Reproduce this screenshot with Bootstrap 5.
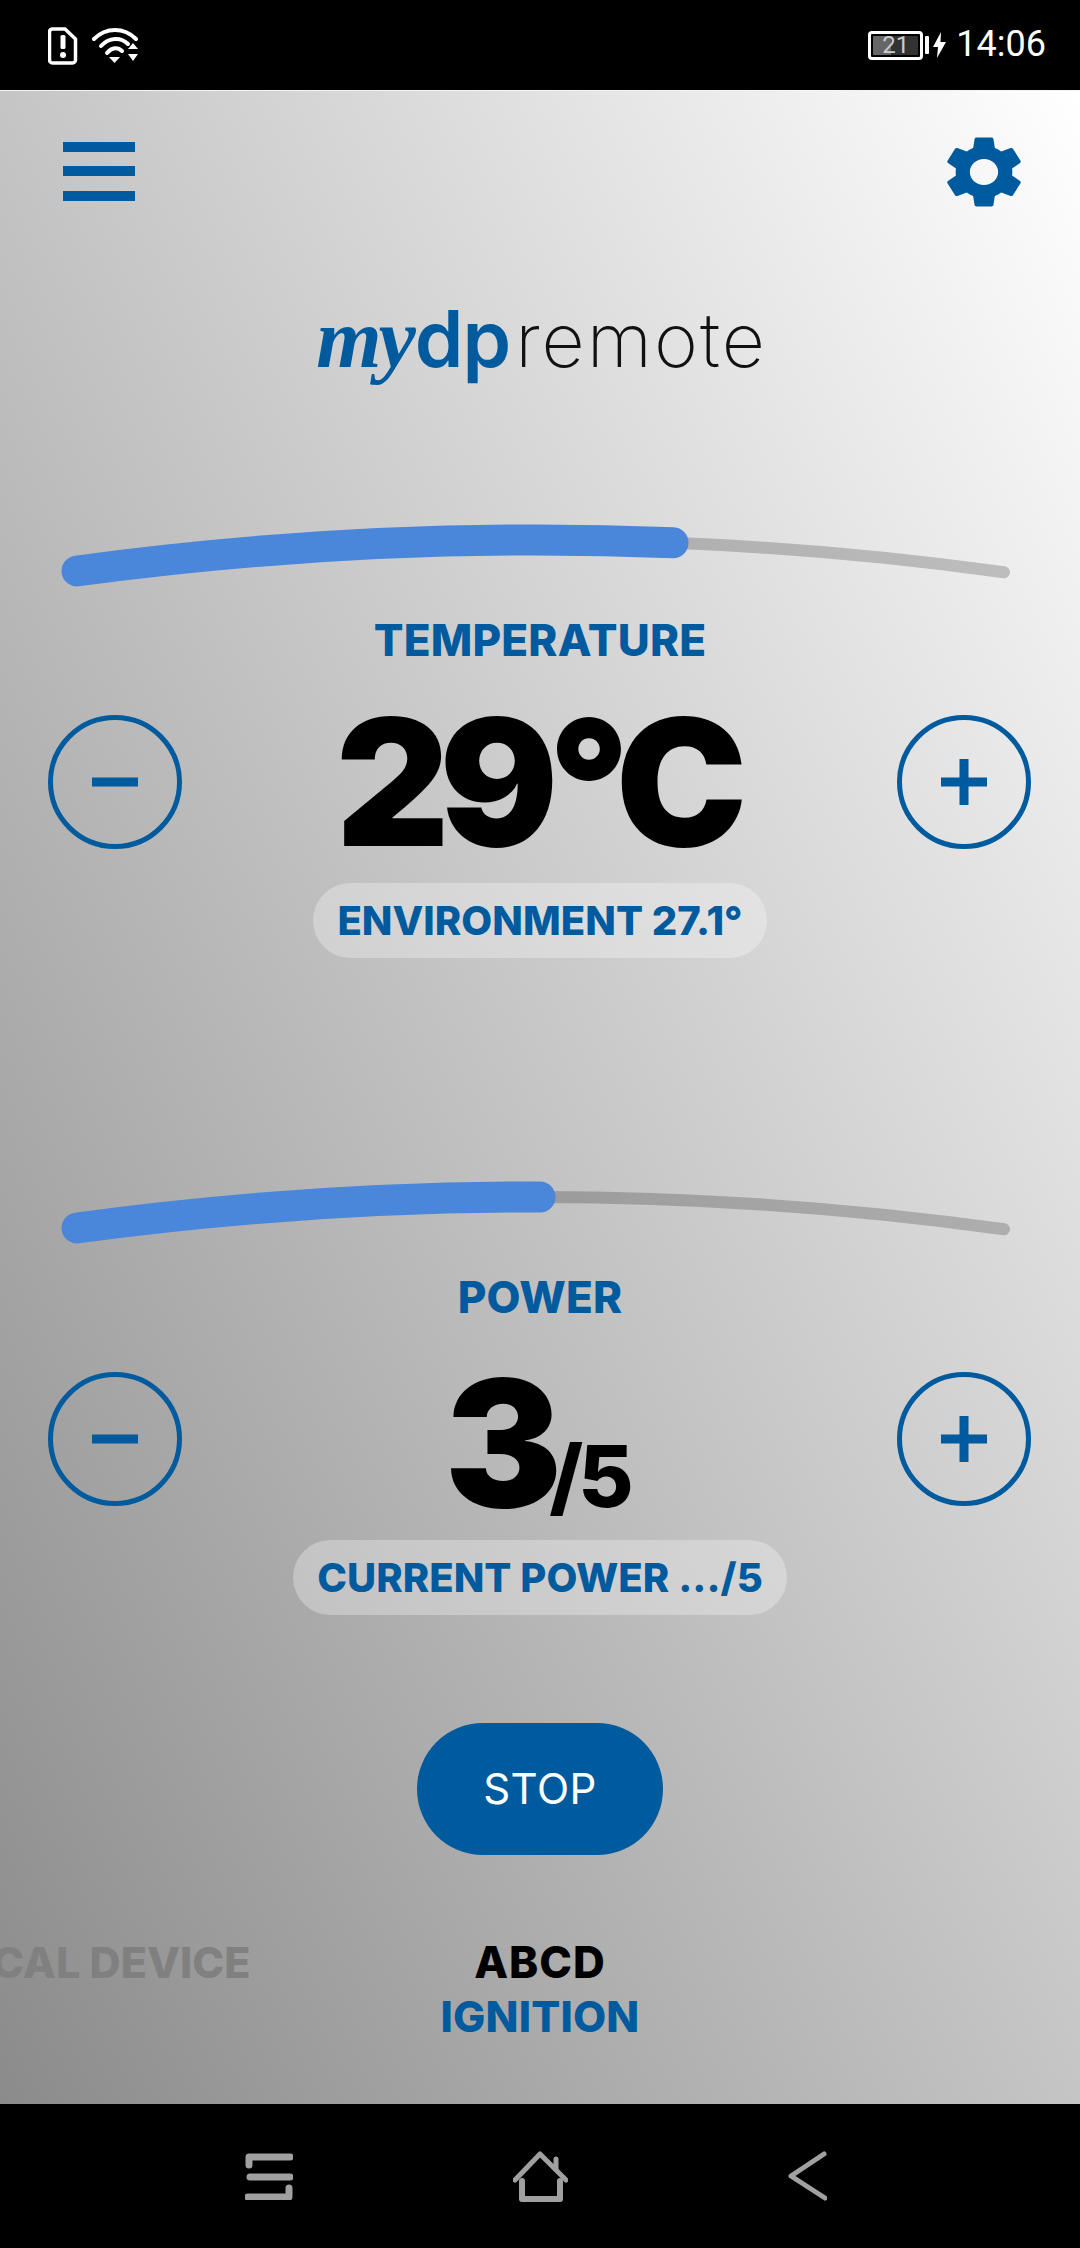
<!doctype html>
<html lang="en">
<head>
<meta charset="utf-8">
<title>mydp remote</title>
<link rel="stylesheet" href="https://cdn.jsdelivr.net/npm/bootstrap@5.3.0/dist/css/bootstrap.min.css">
<style>
html,body{margin:0;background:#000;}
body{width:1080px;height:2248px;overflow:hidden;font-family:Inter,"Liberation Sans",sans-serif;}
.sbar{height:90px;background:#000;padding:0 34px 0 48px;}
.sbar-sim{margin-right:14px;margin-top:2px;}
.sbar-wifi{margin-top:1px;}
.sbar-clock{font-family:Roboto,sans-serif;font-size:36px;line-height:1;color:#fff;margin-left:10px;font-weight:400;padding-bottom:2px;}
.batt{width:55px;height:29px;border:3px solid #fff;border-radius:4px;padding:2px;}
.batt-fill{background:linear-gradient(90deg,#666 0,#666 40%,#333 40%,#333 100%);color:#ccc;font-family:Roboto,sans-serif;font-size:24px;line-height:19px;border-radius:1px;}
.batt-nub{width:4px;height:18px;background:#fff;border-radius:1px;margin-left:2px;}
.mainview{height:2014px;background:linear-gradient(to top right,#8b8b8b,#fff);padding-top:45px;border-top:1px solid #f4f4f4;}
.topbar{padding:0 59px 0 63px;height:72px;}
.burger{width:72px;margin-bottom:2px;}
.burger span{display:block;height:10px;background:#005b9e;margin-bottom:14.5px;}
.burger span:last-child{margin-bottom:0;}
.brand{margin-top:102px;height:92px;line-height:58px;color:#005b9e;padding-left:3px;}
.brand-my{font-family:"Liberation Serif",serif;font-style:italic;font-weight:700;font-size:84px;margin-right:2px;letter-spacing:-3px;}
.brand-dp{font-family:Inter,sans-serif;font-weight:600;font-size:78px;letter-spacing:-1px;margin-right:5px;}
.brand-rm{font-family:Inter,sans-serif;font-weight:200;font-size:75px;color:#111;letter-spacing:2px;}
.gauge{display:block;width:1080px;height:70px;margin-top:120px;}
.gauge.second{margin-top:220px;}
.gauge.first{margin-top:119px;}
.tlabel{font-size:44px;line-height:50px;font-weight:800;color:#005b9e;margin-top:24px;letter-spacing:.2px;}
.ctrls{margin-top:50px;padding:0 49px 0 48px;height:134px;}
.rbtn{width:134px;height:134px;border:5px solid #005b9e;padding:0;background:transparent;}
.rbtn:hover{background:transparent;border-color:#005b9e;}
.bigval{font-size:176px;line-height:134px;font-weight:900;color:#000;letter-spacing:-10px;margin-right:6px;}
.bigval-low{margin-top:42px;}
.big-three{letter-spacing:-13px;}
.subval{font-size:85px;font-weight:800;letter-spacing:-5px;}
.tpill{margin-top:34px;height:75px;line-height:75px;padding:0 24px;font-size:40px;font-weight:800;color:#005b9e;background:rgba(255,255,255,.3);letter-spacing:.05px;}
.stopbtn{margin-top:108px;width:246px;height:132px;background:#005b9e;border:0;color:#fff;font-size:42px;font-weight:400;line-height:132px;padding:0;letter-spacing:.5px;}
.stopbtn:hover{background:#005b9e;color:#fff;}
.carousel-strip{margin-top:81px;display:grid;grid-template-columns:1fr auto 1fr;font-size:43px;line-height:53.5px;font-weight:800;letter-spacing:.2px;}
.strip-side{overflow:hidden;white-space:nowrap;color:#808080;padding-right:190px;letter-spacing:0;}
.strip-name{color:#000;font-size:44px;letter-spacing:1px;}
.strip-mode{color:#005b9e;}
.navb{height:144px;background:#000;}
.navb-row{padding:47px 253px 0 245px;}
.navb-menu{margin-top:2px;}
</style>
</head>
<body>
<div class="sbar d-flex align-items-center">
  <svg width="30" height="38" viewBox="0 0 30 38" class="sbar-sim flex-shrink-0"><path d="M4 2h13l10.500 10V33a3 3 0 0 1-3 3H4.500a3 3 0 0 1-3-3V5a3 3 0 0 1 2.500-3z" fill="none" stroke="#fff" stroke-width="3.500"/><rect x="12.500" y="8" width="5" height="14" rx="1.500" fill="#fff"/><circle cx="15" cy="28" r="3" fill="#fff"/></svg>
  <svg width="48" height="36" viewBox="0 0 48 36" class="sbar-wifi flex-shrink-0"><g fill="none" stroke="#fff" stroke-width="4" stroke-linecap="round"><path d="M2 11C14 -1 32 -1 44 11"/><path d="M9 18C17 9 29 9 36 16"/><path d="M15 25C20 19 26 19 30 23"/></g><path d="M17 29h11l-5.500 6z" fill="#fff"/><path d="M36 21l5-6 5 6z" fill="#fff"/><path d="M36 26h10l-5 7z" fill="#fff"/></svg>
  <div class="ms-auto d-flex align-items-center">
    <div class="batt"><div class="batt-fill text-center">21</div></div>
    <div class="batt-nub"></div>
    <svg width="13" height="26" viewBox="0 0 13 26" class="ms-1"><path d="M8 0L0 15h5l-1 11 9-16H7.500z" fill="#fff"/></svg>
    <div class="sbar-clock">14:06</div>
  </div>
</div>

<div class="mainview d-flex flex-column">
  <div class="topbar d-flex justify-content-between align-items-center">
    <div class="burger"><span></span><span></span><span></span></div>
    <svg width="74" height="72" viewBox="2.600 2 18.800 20" preserveAspectRatio="none"><path fill="#005b9e" d="M19.140 12.940c.04-.3.06-.61.06-.94 0-.32-.02-.64-.07-.94l2.030-1.580c.18-.14.23-.41.12-.61l-1.920-3.320c-.12-.22-.37-.29-.59-.22l-2.390.96c-.5-.38-1.030-.7-1.620-.94l-.36-2.540c-.04-.24-.24-.41-.48-.41h-3.840c-.24 0-.43.17-.47.41l-.36 2.540c-.59.24-1.130.57-1.620.94l-2.390-.96c-.22-.08-.47 0-.59.22L2.740 8.870c-.12.21-.08.47.12.61l2.030 1.580c-.05.3-.09.63-.09.94s.02.64.07.94l-2.030 1.580c-.18.14-.23.41-.12.61l1.920 3.320c.12.22.37.29.59.22l2.390-.96c.5.38 1.030.7 1.620.94l.36 2.540c.05.24.24.41.48.41h3.840c.24 0 .44-.17.47-.41l.36-2.540c.59-.24 1.130-.56 1.620-.94l2.390.96c.22.08.47 0 .59-.22l1.920-3.320c.12-.22.07-.47-.12-.61l-2.010-1.580zM12 15.600c-1.980 0-3.600-1.620-3.600-3.600s1.620-3.600 3.600-3.600 3.600 1.620 3.600 3.600-1.620 3.600-3.600 3.600z"/></svg>
  </div>

  <div class="brand d-flex justify-content-center align-items-baseline text-nowrap">
    <span class="brand-my">my</span><span class="brand-dp">dp</span><span class="brand-rm">remote</span>
  </div>

  <svg class="gauge first" viewBox="0 0 1080 70">
    <path d="M673 21.800A3406 3406 0 0 1 1004 51.300" fill="none" stroke="#000" stroke-opacity=".2" stroke-width="12" stroke-linecap="round"/>
    <path d="M77 50A3406 3406 0 0 1 673 21.800" fill="none" stroke="#4a86d9" stroke-width="31" stroke-linecap="round"/>
  </svg>
  <div class="tlabel text-center">TEMPERATURE</div>
  <div class="ctrls d-flex justify-content-between align-items-center">
    <button class="btn rbtn rounded-circle d-flex align-items-center justify-content-center" type="button" aria-label="decrease"><svg width="46" height="46" viewBox="0 0 46 46"><rect x="0" y="18.500" width="46" height="9" fill="#005b9e"/></svg></button>
    <div class="bigval">29°C</div>
    <button class="btn rbtn rounded-circle d-flex align-items-center justify-content-center" type="button" aria-label="increase"><svg width="46" height="46" viewBox="0 0 46 46"><path d="M0 18.500h18.500V0h9v18.500H46v9H27.500V46h-9V27.500H0z" fill="#005b9e"/></svg></button>
  </div>
  <div class="text-center"><span class="tpill d-inline-block rounded-pill text-nowrap">ENVIRONMENT 27.1°</span></div>

  <svg class="gauge second" viewBox="0 0 1080 70">
    <path d="M540 19A3406 3406 0 0 1 1004 51.300" fill="none" stroke="#000" stroke-opacity=".2" stroke-width="12" stroke-linecap="round"/>
    <path d="M77 50A3406 3406 0 0 1 540 19" fill="none" stroke="#4a86d9" stroke-width="31" stroke-linecap="round"/>
  </svg>
  <div class="tlabel text-center">POWER</div>
  <div class="ctrls d-flex justify-content-between align-items-center">
    <button class="btn rbtn rounded-circle d-flex align-items-center justify-content-center" type="button" aria-label="decrease"><svg width="46" height="46" viewBox="0 0 46 46"><rect x="0" y="18.500" width="46" height="9" fill="#005b9e"/></svg></button>
    <div class="bigval bigval-low"><span class="big-three">3</span><span class="subval">/5</span></div>
    <button class="btn rbtn rounded-circle d-flex align-items-center justify-content-center" type="button" aria-label="increase"><svg width="46" height="46" viewBox="0 0 46 46"><path d="M0 18.500h18.500V0h9v18.500H46v9H27.500V46h-9V27.500H0z" fill="#005b9e"/></svg></button>
  </div>
  <div class="text-center"><span class="tpill d-inline-block rounded-pill text-nowrap">CURRENT POWER .../5</span></div>

  <div class="text-center"><button class="btn stopbtn rounded-pill" type="button">STOP</button></div>

  <div class="carousel-strip">
    <div class="strip-side d-flex justify-content-end">LOCAL DEVICE</div>
    <div class="text-center"><div class="strip-name">ABCD</div><div class="strip-mode">IGNITION</div></div>
    <div></div>
  </div>
</div>

<div class="navb">
  <div class="navb-row d-flex align-items-start justify-content-between w-100">
    <svg width="48" height="47" viewBox="0 0 48 47" class="navb-menu" fill="none" stroke="#a0a0a0" stroke-width="7" stroke-linecap="round" stroke-linejoin="round"><path d="M4 12V4H45"/><path d="M5 24H45"/><path d="M3 44H44V35"/></svg>
    <svg width="55" height="52" viewBox="0 0 55 52" fill="none" stroke="#a0a0a0" stroke-linecap="round" stroke-linejoin="round"><path d="M2 29L27 3 53 29" stroke-width="5"/><path d="M43 8V18" stroke-width="5"/><path d="M9 30V48H47V30" stroke-width="6"/></svg>
    <svg width="39" height="50" viewBox="0 0 39 50" fill="none" stroke="#a0a0a0" stroke-width="5" stroke-linecap="round" stroke-linejoin="round"><path d="M36 3L3 25 37 47"/></svg>
  </div>
</div>
<script src="https://cdn.jsdelivr.net/npm/bootstrap@5.3.0/dist/js/bootstrap.bundle.min.js"></script>
</body>
</html>
